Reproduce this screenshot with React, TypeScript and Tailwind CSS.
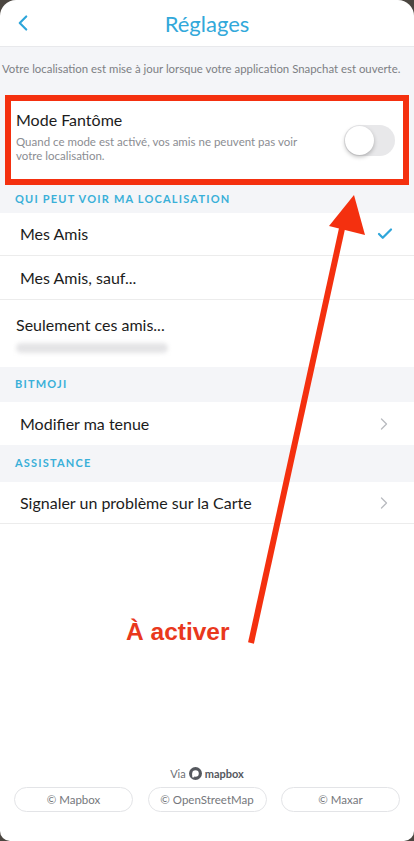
import { ChevronLeft, ChevronRight, Check } from "lucide-react";

const font = { fontFamily: "Lato, 'Noto Sans', sans-serif" };

function Row({ label, right, className = "" }: { label: string; right?: React.ReactNode; className?: string }) {
  return (
    <div className={"flex items-center justify-between bg-white border-b border-[#ececec] pl-5 pr-5 " + className}>
      <span className="text-[16px] text-[#1c1c1c]">{label}</span>
      {right}
    </div>
  );
}

function SectionHead({ label, h }: { label: string; h: string }) {
  return (
    <div className={"flex items-center bg-[#f4f5f8] pl-[15px] " + h}>
      <span className="text-[11px] font-bold tracking-[1.2px] text-[#3ab0d8]">{label}</span>
    </div>
  );
}

export default function App() {
  return (
    <div className="bg-[#4b4640] w-[414px] h-[841px]" style={font}>
      <div className="relative flex flex-col w-full h-full bg-white rounded-t-[16px] rounded-b-[10px] overflow-hidden">
        <header className="relative flex items-center justify-center h-[47px] border-b border-[#e8e9ec]">
          <ChevronLeft className="absolute left-[10px] top-[10px] text-[#2fa6da]" size={26} strokeWidth={2} />
          <h1 className="text-[22px] text-[#32a8da]">Réglages</h1>
        </header>

        <div className="bg-[#f4f5f8] pt-[12px]">
          <p className="text-[11.4px] text-[#7d7f84] pl-[2px] whitespace-nowrap h-[20px] leading-[20px]">
            Votre localisation est mise à jour lorsque votre application Snapchat est ouverte.
          </p>
          <div className="mt-[16px] mx-[5px] border-[6px] border-[#f4300f] bg-white h-[90px] flex items-start justify-between pl-[5px] pr-[8px] pt-[9px]">
            <div className="flex flex-col">
              <span className="text-[16px] text-[#1c1c1c] leading-[20px]">Mode Fantôme</span>
              <span className="text-[11.5px] text-[#8b8d92] leading-[14px] mt-[5px] w-[295px]">
                Quand ce mode est activé, vos amis ne peuvent pas voir votre localisation.
              </span>
            </div>
            <div className="self-center -mt-[9px] w-[51px] h-[31px] rounded-full bg-[#e8e8ea] p-[1px] flex items-center">
              <div className="w-[29px] h-[29px] rounded-full bg-white shadow-[0_2px_4px_rgba(0,0,0,0.25)]" />
            </div>
          </div>
        </div>

        <SectionHead label="QUI PEUT VOIR MA LOCALISATION" h="h-[28px]" />
        <Row label="Mes Amis" right={<Check className="text-[#2fa6da]" size={18} strokeWidth={3} />} className="h-[43px]" />
        <Row label="Mes Amis, sauf..." className="h-[44px]" />
        <div className="bg-white h-[67px] pl-4 pt-[13px]">
          <span className="text-[16px] text-[#1c1c1c]">Seulement ces amis...</span>
          <div className="mt-[6px] w-[152px] h-[10px] rounded-full bg-[#e4e4e6] blur-[2px]" />
        </div>
        <SectionHead label="BITMOJI" h="h-[35px]" />
        <Row label="Modifier ma tenue" right={<ChevronRight className="text-[#b9bbc0]" size={20} strokeWidth={1.6} />} className="h-[43px] border-b-0" />
        <SectionHead label="ASSISTANCE" h="h-[37px]" />
        <Row label="Signaler un problème sur la Carte" right={<ChevronRight className="text-[#b9bbc0]" size={20} strokeWidth={1.6} />} className="h-[42px]" />

        <div className="flex-1" />

        <footer className="flex flex-col items-center pb-[29px]">
          <div className="flex items-center gap-[3px] text-[11px] text-[#6e7075]">
            <span>Via</span>
            <svg width="13" height="13" viewBox="0 0 20 20">
              <circle cx="10" cy="10" r="10" fill="#55585e" />
              <circle cx="10" cy="10" r="5" fill="#fff" />
              <rect x="5" y="10" width="3" height="6" fill="#fff" />
            </svg>
            <span className="font-bold text-[#55585e]">mapbox</span>
          </div>
          <div className="mt-[5px] flex w-full justify-between px-[14px]">
            {["© Mapbox", "© OpenStreetMap", "© Maxar"].map((t) => (
              <div key={t} className="w-[119px] h-[25px] rounded-full border border-[#e3e4e7] flex items-center justify-center text-[11.5px] text-[#75777c]">
                {t}
              </div>
            ))}
          </div>
        </footer>

        <svg className="absolute inset-0 pointer-events-none" width="414" height="841">
          <line x1="251" y1="643" x2="343" y2="224" stroke="#f4300f" strokeWidth="6" />
          <polygon points="354,195 329,226 365,235" fill="#f4300f" />
        </svg>
        <span
          className="absolute left-[126px] top-[614px] text-[24.5px] font-bold text-[#e9381d]"
          style={{ fontFamily: "'Liberation Sans', Arial, sans-serif" }}
        >
          À activer
        </span>
      </div>
    </div>
  );
}
